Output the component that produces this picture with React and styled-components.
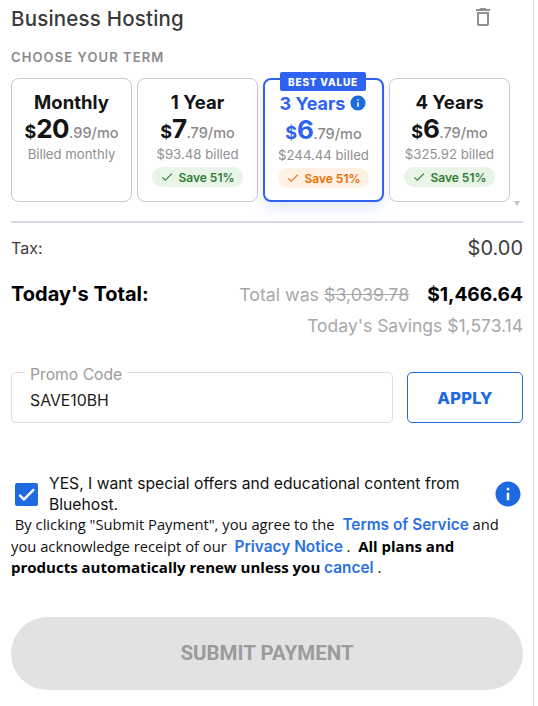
import React from 'react';
import styled, { createGlobalStyle } from 'styled-components';

const GlobalStyle = createGlobalStyle`
  html, body {
    margin: 0;
    padding: 0;
    background: #fff;
  }
  body {
    font-family: 'Inter', 'Liberation Sans', sans-serif;
  }
`;

const Page = styled.div`
  width: 534px;
  height: 706px;
  box-sizing: border-box;
  padding: 0 10px 0 11px;
  border-right: 1px solid #dcdcdc;
  overflow: hidden;
`;

const Header = styled.div`
  display: flex;
  justify-content: space-between;
  align-items: flex-start;
  height: 38px;
  padding-right: 28px;
`;

const Title = styled.h2`
  margin: 0;
  font-size: 20.5px;
  line-height: 38px;
  font-weight: 500;
  letter-spacing: 0.2px;
  color: #3a3a3a;
`;

const TrashIcon = styled.svg`
  width: 24px;
  height: 24px;
  margin-top: 5px;
  fill: #8f8f8f;
`;

const SectionLabel = styled.div`
  margin-top: 11px;
  font-size: 13px;
  line-height: 16px;
  font-weight: 600;
  letter-spacing: 1.1px;
  color: #8a8a8a;
`;

const Terms = styled.div`
  display: flex;
  gap: 5px;
  margin-top: 13px;
`;

const Card = styled.div`
  position: relative;
  width: 121px;
  height: 124px;
  box-sizing: border-box;
  display: flex;
  flex-direction: column;
  align-items: center;
  padding-top: 12px;
  background: #fff;
  border-radius: 8px;
  border: ${p => (p.$selected ? '2px solid #2f62f1' : '1px solid #c9c9c9')};
  box-shadow: ${p => (p.$selected ? '0 6px 14px rgba(47, 98, 241, 0.14)' : 'none')};
`;

const Badge = styled.div`
  position: absolute;
  top: -8px;
  left: 15px;
  width: 86px;
  height: 19px;
  display: flex;
  align-items: center;
  justify-content: center;
  border-radius: 2px;
  background: #2f62f1;
  color: #fff;
  font-size: 10px;
  font-weight: 800;
  letter-spacing: 0.8px;
`;

const TermName = styled.div`
  display: flex;
  align-items: center;
  gap: 4px;
  height: 22px;
  font-size: ${p => (p.$selected ? '18px' : '18.5px')};
  font-weight: 700;
  color: ${p => (p.$selected ? '#2f62f1' : '#141414')};
`;

const InfoIcon = styled.svg`
  flex: none;
  width: ${p => p.$size}px;
  height: ${p => p.$size}px;
  fill: #1e6ae0;
`;

const Price = styled.div`
  display: flex;
  align-items: baseline;
  height: 30px;
  color: #8a8a8a;
  font-size: 14.5px;
  font-weight: 500;
`;

const Currency = styled.span`
  font-size: 18px;
  font-weight: 700;
  color: ${p => (p.$selected ? '#2f62f1' : '#141414')};
`;

const Dollars = styled.span`
  font-size: 26px;
  font-weight: 700;
  letter-spacing: -0.6px;
  color: ${p => (p.$selected ? '#2f62f1' : '#141414')};
`;

const Billed = styled.div`
  margin-top: 3px;
  font-size: 13.2px;
  line-height: 17px;
  color: #8f8f8f;
`;

const Save = styled.div`
  display: flex;
  align-items: center;
  justify-content: center;
  gap: 4px;
  width: 91px;
  height: 20px;
  margin-top: 4px;
  border-radius: 10px;
  font-size: 12px;
  font-weight: 600;
  background: ${p => (p.$selected ? '#fff1e3' : '#e8f4e8')};
  color: ${p => (p.$selected ? '#ef6c00' : '#2e7d32')};
`;

const CheckIcon = styled.svg`
  width: 14px;
  height: 14px;
  fill: currentColor;
`;

const ScrollRow = styled.div`
  display: flex;
  justify-content: flex-end;
  padding-right: 3px;
  height: 19px;
`;

const ScrollArrow = styled.div`
  margin-top: -1px;
  width: 0;
  height: 0;
  border-left: 3.5px solid transparent;
  border-right: 3.5px solid transparent;
  border-top: 5px solid #c4c4c4;
`;

const Divider = styled.div`
  height: 2px;
  background: #d5d8e6;
`;

const TaxRow = styled.div`
  display: flex;
  justify-content: space-between;
  align-items: center;
  margin-top: 13px;
  height: 24px;
  color: #3d3d3d;
`;

const TaxLabel = styled.span`
  font-size: 16px;
`;

const TaxValue = styled.span`
  font-size: 20px;
`;

const TotalRow = styled.div`
  display: flex;
  justify-content: space-between;
  align-items: center;
  margin-top: 21px;
  height: 26px;
`;

const TotalLabel = styled.span`
  font-size: 20px;
  font-weight: 700;
  color: #000;
`;

const TotalRight = styled.div`
  display: flex;
  align-items: center;
  gap: 18px;
`;

const TotalWas = styled.span`
  font-size: 17.8px;
  color: #a8a8a8;
`;

const TotalValue = styled.span`
  font-size: 19.2px;
  font-weight: 700;
  color: #000;
`;

const Savings = styled.div`
  margin-top: 7px;
  text-align: right;
  font-size: 17.5px;
  line-height: 24px;
  color: #a8a8a8;
`;

const PromoRow = styled.div`
  display: flex;
  gap: 14px;
  margin-top: 34px;
`;

const PromoField = styled.fieldset`
  flex: none;
  width: 382px;
  height: 59px;
  box-sizing: border-box;
  margin: -8px 0 0;
  padding: 0 0 0 13px;
  border: 1px solid #dedede;
  border-radius: 5px;
`;

const PromoLegend = styled.legend`
  padding: 0 5px;
  font-size: 15.7px;
  line-height: 16px;
  color: #a09a9a;
  transform: translateY(3px);
`;

const PromoValue = styled.div`
  margin: 11px 0 0 5px;
  font-size: 15.8px;
  line-height: 20px;
  color: #222;
`;

const ApplyButton = styled.button`
  width: 116px;
  height: 51px;
  box-sizing: border-box;
  background: #fff;
  border: 1px solid #1e6ae0;
  border-radius: 5px;
  color: #1e6ae0;
  font-family: inherit;
  font-size: 16.5px;
  font-weight: 800;
  letter-spacing: 0.3px;
`;

const OptIn = styled.div`
  display: flex;
  align-items: center;
  margin-top: 50px;
  padding-left: 4px;
`;

const CheckBox = styled.div`
  flex: none;
  width: 23px;
  height: 23px;
  display: flex;
  align-items: center;
  justify-content: center;
  border-radius: 2px;
  background: #1e6ae0;
  color: #fff;
`;

const BigCheck = styled.svg`
  width: 21px;
  height: 21px;
  fill: currentColor;
  stroke: currentColor;
  stroke-width: 1;
`;

const OptInText = styled.div`
  flex: 1;
  margin-left: 11px;
  font-size: 15.7px;
  line-height: 21px;
  color: #111;
`;

const Legal = styled.p`
  margin: -1px 0 0;
  font-family: 'Open Sans', sans-serif;
  font-size: 14.75px;
  line-height: 21.5px;
  color: #111;
  strong {
    font-size: 15px;
    font-weight: 700;
    color: #000;
  }
`;

const LegalLink = styled.a`
  margin-left: ${p => (p.$tight ? '0' : '4px')};
  font-family: 'Inter', sans-serif;
  font-size: 15.4px;
  font-weight: 600;
  color: #2a6fe4;
`;

const SubmitButton = styled.button`
  display: block;
  width: 100%;
  height: 73px;
  margin-top: 38px;
  border: 0;
  border-radius: 37px;
  background: #e2e2e2;
  color: #9b9b9b;
  font-family: 'Roboto', sans-serif;
  font-size: 20.5px;
  font-weight: 700;
`;

const INFO_PATH = 'M12 2C6.48 2 2 6.48 2 12s4.48 10 10 10 10-4.48 10-10S17.52 2 12 2zm1 15h-2v-6h2v6zm0-8h-2V7h2v2z';
const CHECK_PATH = 'M9 16.17 4.83 12l-1.42 1.41L9 19 21 7l-1.41-1.41z';

const terms = [
  { name: 'Monthly', dollars: '20', cents: '.99/mo', billed: 'Billed monthly' },
  { name: '1 Year', dollars: '7', cents: '.79/mo', billed: '$93.48 billed', save: 'Save 51%' },
  { name: '3 Years', dollars: '6', cents: '.79/mo', billed: '$244.44 billed', save: 'Save 51%', selected: true },
  { name: '4 Years', dollars: '6', cents: '.79/mo', billed: '$325.92 billed', save: 'Save 51%' },
];

const TermCard = ({ term }) => (
  <Card $selected={term.selected}>
    {term.selected && <Badge>BEST VALUE</Badge>}
    <TermName $selected={term.selected}>
      {term.name}
      {term.selected && (
        <InfoIcon $size={18} viewBox="0 0 24 24"><path d={INFO_PATH} /></InfoIcon>
      )}
    </TermName>
    <Price>
      <Currency $selected={term.selected}>$</Currency>
      <Dollars $selected={term.selected}>{term.dollars}</Dollars>
      {term.cents}
    </Price>
    <Billed>{term.billed}</Billed>
    {term.save && (
      <Save $selected={term.selected}>
        <CheckIcon viewBox="0 0 24 24"><path d={CHECK_PATH} /></CheckIcon>
        {term.save}
      </Save>
    )}
  </Card>
);

const App = () => (
  <>
    <GlobalStyle />
    <Page>
      <Header>
        <Title>Business Hosting</Title>
        <TrashIcon viewBox="0 0 24 24">
          <path d="M6 19c0 1.1.9 2 2 2h8c1.1 0 2-.9 2-2V7H6v12zM8 9h8v10H8V9zm7.5-5l-1-1h-5l-1 1H5v2h14V4z" />
        </TrashIcon>
      </Header>
      <SectionLabel>CHOOSE YOUR TERM</SectionLabel>
      <Terms>
        {terms.map(t => <TermCard key={t.name} term={t} />)}
      </Terms>
      <ScrollRow><ScrollArrow /></ScrollRow>
      <Divider />
      <TaxRow>
        <TaxLabel>Tax:</TaxLabel>
        <TaxValue>$0.00</TaxValue>
      </TaxRow>
      <TotalRow>
        <TotalLabel>Today's Total:</TotalLabel>
        <TotalRight>
          <TotalWas>Total was <s>$3,039.78</s></TotalWas>
          <TotalValue>$1,466.64</TotalValue>
        </TotalRight>
      </TotalRow>
      <Savings>Today's Savings $1,573.14</Savings>
      <PromoRow>
        <PromoField>
          <PromoLegend>Promo Code</PromoLegend>
          <PromoValue>SAVE10BH</PromoValue>
        </PromoField>
        <ApplyButton>APPLY</ApplyButton>
      </PromoRow>
      <OptIn>
        <CheckBox>
          <BigCheck viewBox="0 0 24 24"><path d={CHECK_PATH} /></BigCheck>
        </CheckBox>
        <OptInText>YES, I want special offers and educational content from Bluehost.</OptInText>
        <InfoIcon $size={30} viewBox="0 0 24 24"><path d={INFO_PATH} /></InfoIcon>
      </OptIn>
      <Legal>
        &nbsp;By clicking "Submit Payment", you agree to the <LegalLink>Terms of Service</LegalLink> and
        you acknowledge receipt of our <LegalLink>Privacy Notice</LegalLink> .&nbsp; <strong>All plans and
        products automatically renew unless you</strong> <LegalLink $tight>cancel</LegalLink> .
      </Legal>
      <SubmitButton>SUBMIT PAYMENT</SubmitButton>
    </Page>
  </>
);

export default App;
